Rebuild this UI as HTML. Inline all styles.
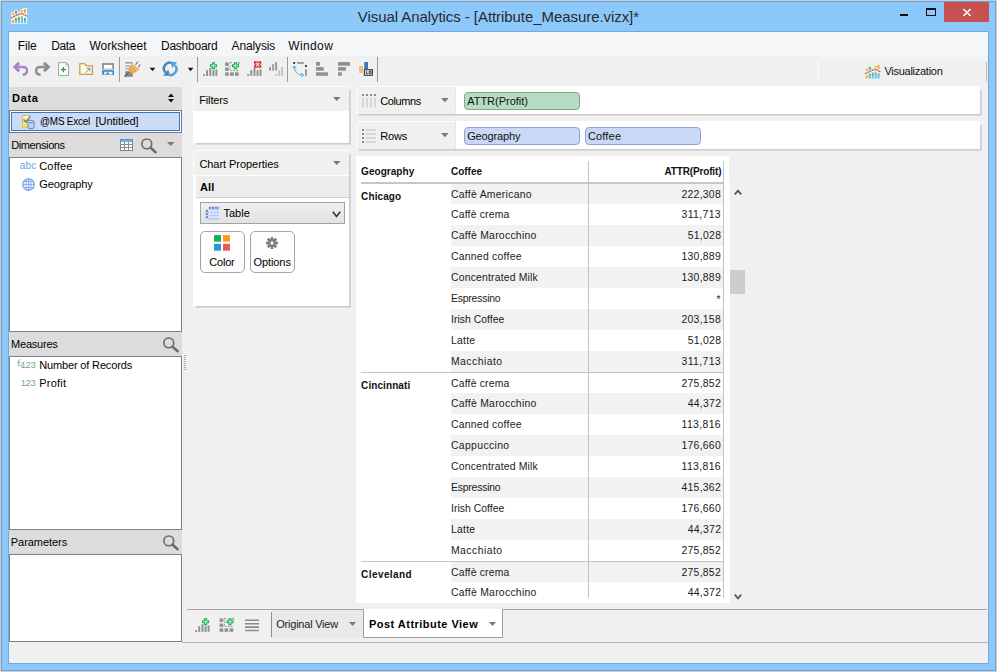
<!DOCTYPE html>
<html lang="en"><head><meta charset="utf-8"><title>Visual Analytics - [Attribute_Measure.vizx]*</title>
<style>
html,body{margin:0;padding:0;}
body{width:997px;height:672px;overflow:hidden;background:#8cc8fa;position:relative;font-family:"Liberation Sans",Arial,sans-serif;}
#app div,#app svg,#app span{position:absolute;}
#app span{white-space:pre;line-height:1;display:block;}
#app{position:absolute;left:0;top:0;width:997px;height:672px;overflow:hidden;}
svg{overflow:visible;}
</style></head>
<body><div id="app">
<div style="left:0px;top:0px;width:997px;height:672px;box-sizing:border-box;border:1px solid #cfcdc9;"></div>
<div style="left:1px;top:1px;width:995px;height:670px;box-sizing:border-box;border:1px solid #6da0d6;"></div>
<svg style="left:11px;top:8px" width="16" height="16" viewBox="0 0 16 16"><path d="M0 4.2 H3.2 V2.25 H7.1 V3.9 H9.3 V1.2 H12.1 V0.1 H16.1 V15.8 H0 Z" fill="#fbf5ea"/><rect x="0.9" y="4.9" width="2.1" height="2" fill="#fbad18"/><rect x="3.9" y="3" width="2.2" height="2.8" fill="#5fad65"/><rect x="10" y="2.1" width="2" height="1.8" fill="#fbad18"/><rect x="13" y="1" width="2" height="3.9" fill="#fbad18"/><rect x="0.9" y="11.9" width="2.1" height="3" fill="#fbad18"/><rect x="3.9" y="10.1" width="2.1" height="1.9" fill="#5fad65"/><rect x="3.9" y="12" width="2.1" height="2.9" fill="#5bc0fb"/><rect x="7" y="8.9" width="1.9" height="3.1" fill="#5fad65"/><rect x="7" y="12" width="1.9" height="2.9" fill="#5bc0fb"/><rect x="10" y="8.9" width="2" height="6" fill="#5bc0fb"/><rect x="10.4" y="8" width="1" height="1" fill="#5fad65"/><rect x="13" y="9.9" width="2" height="2.1" fill="#5fad65"/><rect x="13" y="12" width="2" height="2.9" fill="#5bc0fb"/><path d="M0 10.1 Q5 7.2 10 5.5 Q13 6 16.1 8.4" fill="none" stroke="#f5a58c" stroke-width="1.5"/><path d="M0 10.1 Q5 7.2 10 5.5 Q13 6 16.1 8.4" fill="none" stroke="#8b6bc6" stroke-width="1.1" stroke-dasharray="1.6 1"/></svg>
<span id="t0" style="top:9.00px;font-size:15px;color:#2a2a2a;letter-spacing:-0.064px;left:357.80px;">Visual Analytics - [Attribute_Measure.vizx]*</span>
<div style="left:900px;top:14px;width:8px;height:2px;background:#111;"></div>
<div style="left:926px;top:8px;width:10px;height:8px;box-sizing:border-box;border:1px solid #111;border-top:2px solid #111;"></div>
<div style="left:944px;top:2px;width:45px;height:20px;background:#c75050;"></div>
<svg style="left:962px;top:8px" width="10" height="9" viewBox="0 0 10 9"><path d="M1.4 1 L8.6 8 M8.6 1 L1.4 8" stroke="#fff" stroke-width="1.6" fill="none"/></svg>
<div style="left:8px;top:31px;width:981px;height:633px;background:#f0f0f0;box-sizing:border-box;border:1px solid #70a8e0;"></div>
<div style="left:9px;top:32px;width:979px;height:24px;background:#f5f6f7;"></div>
<span id="t1" style="top:40.00px;font-size:12px;color:#0a0a0a;letter-spacing:-0.136px;left:17.70px;">File</span>
<span id="t2" style="top:40.00px;font-size:12px;color:#0a0a0a;letter-spacing:-0.390px;left:51.20px;">Data</span>
<span id="t3" style="top:40.00px;font-size:12px;color:#0a0a0a;letter-spacing:0.007px;left:89.40px;">Worksheet</span>
<span id="t4" style="top:40.00px;font-size:12px;color:#0a0a0a;letter-spacing:-0.247px;left:161.00px;">Dashboard</span>
<span id="t5" style="top:40.00px;font-size:12px;color:#0a0a0a;letter-spacing:-0.123px;left:231.50px;">Analysis</span>
<span id="t6" style="top:40.00px;font-size:12px;color:#0a0a0a;letter-spacing:0.385px;left:288.20px;">Window</span>
<svg style="left:0;top:56px" width="400" height="30" viewBox="0 56 400 30"><path d="M19.2 62.9 L14.9 67 L19.2 71.1" fill="none" stroke="#a983c9" stroke-width="3" stroke-linejoin="miter"/><path d="M15.5 67 H23 C28 67 29 73.5 22.6 75" fill="none" stroke="#a983c9" stroke-width="2.3"/><path d="M44 62.9 L48.3 67 L44 71.1" fill="none" stroke="#8d8d8d" stroke-width="3"/><path d="M47.7 67 H40.2 C35.2 67 34.2 73.5 40.6 75" fill="none" stroke="#8d8d8d" stroke-width="2.3"/><path d="M58.5 62.6 H66 L68.5 65.1 V75.4 H58.5 Z" fill="#fff" stroke="#a2a2a2" stroke-width="1"/><path d="M66 62.6 V65.1 H68.5 Z" fill="#d8d8d8" stroke="#a2a2a2" stroke-width=".7"/><path d="M63.4 67 V72.2 M60.8 69.6 H66" stroke="#2a9a35" stroke-width="1.3"/><path d="M79.8 74.4 V63.7 H84.4 L86.6 65.8 H92.4 V74.4 Z" fill="#fffbd6" stroke="#c69c5e" stroke-width="1.3" stroke-linejoin="round"/><path d="M85.4 72.8 L89.6 68.6 M86.8 68.3 H89.9 V71.4" stroke="#3a8fd0" stroke-width=".9" fill="none"/><rect x="102" y="63.1" width="12" height="6.2" fill="#8e8e8e"/><rect x="103.8" y="64.9" width="8.5" height="3.8" fill="#fff"/><path d="M102 69.9 H114 V75 H103 L102 74 Z" fill="#3f8fcf"/><rect x="104.2" y="71.8" width="8.2" height="2.6" fill="#f4f8fc"/><rect x="106.3" y="72.5" width="2.7" height="1.9" fill="#3f8fcf"/><rect x="119" y="57" width="1" height="25" fill="#9a9a9a"/><rect x="125.2" y="62.3" width="7.6" height="1.1" fill="#7c7c7c"/><rect x="125.2" y="65.4" width="7.6" height="1.2" fill="#a0a0a0"/><rect x="125.2" y="68.3" width="7.6" height="1.2" fill="#a0a0a0"/><rect x="125.2" y="71.2" width="7.6" height="5.6" fill="#8c8c8c"/><path d="M124.5 76.8 L129.6 71.6" stroke="#5f5f5f" stroke-width="1.3"/><path d="M135.4 64.8 L138 61.7 M138.3 67.6 L140.2 64.2" stroke="#777" stroke-width="1.1"/><path d="M132.2 63.4 L139.2 69.6 C139.4 70.4 138.4 70.6 137.6 70.2 C136 73 131.6 74.6 129.4 72.4 C127 70 128.6 66.4 131.8 64.6 C131.2 63.8 131.6 63.2 132.2 63.4 Z" fill="#e9a85c"/><path d="M131.4 65.2 L137.6 70.4" stroke="#f6d3a4" stroke-width=".8"/><rect x="129.8" y="72.7" width="1.2" height="1.2" fill="#22c422"/><path d="M149.7 67.8 H155.3 L152.5 71.2 Z" fill="#111"/><path d="M172.4 63.2 A5.9 5.9 0 0 0 165.6 72.6" fill="none" stroke="#3f86c2" stroke-width="2.5"/><path d="M163.1 75.7 H169.9 L168.3 69.5 Z" fill="#3f86c2"/><g transform="rotate(180 170.2 68.8)"><path d="M172.4 63.2 A5.9 5.9 0 0 0 165.6 72.6" fill="none" stroke="#5aa2d6" stroke-width="2.5"/><path d="M163.1 75.7 H169.9 L168.3 69.5 Z" fill="#5aa2d6"/></g><path d="M187.8 67.8 H193.4 L190.6 71.2 Z" fill="#111"/><rect x="197" y="57" width="1" height="25" fill="#9a9a9a"/><rect x="203.0" y="74.1" width="1.9" height="1.8" fill="#8f8f8f"/><rect x="206.1" y="70.2" width="1.9" height="5.7" fill="#8f8f8f"/><rect x="209.3" y="68.1" width="1.9" height="7.8" fill="#8f8f8f"/><rect x="212.4" y="70.2" width="1.9" height="5.7" fill="#8f8f8f"/><rect x="215.4" y="69.3" width="1.9" height="6.6" fill="#8f8f8f"/><path d="M211.95 62.2 h3.1 v1.95 h1.95 v3.1 h-1.95 v1.95 h-3.1 v-1.95 h-1.95 v-3.1 h1.95 Z" fill="#14b254"/><path d="M213.5 63.400000000000006 V68.0 M211.2 65.7 H215.8" stroke="#a8ecb8" stroke-width="1.3"/><rect x="225.1" y="62.5" width="3.7" height="3.4" fill="#8f8f8f"/><rect x="230.0" y="62.5" width="3.7" height="3.4" fill="#8f8f8f"/><rect x="235.0" y="62.5" width="3.7" height="3.4" fill="#8f8f8f"/><rect x="225.1" y="67.5" width="3.7" height="3.4" fill="#8f8f8f"/><rect x="230.0" y="67.5" width="3.7" height="3.4" fill="#8f8f8f"/><rect x="235.0" y="67.5" width="3.7" height="3.4" fill="#8f8f8f"/><rect x="225.1" y="72.4" width="3.7" height="3.4" fill="#8f8f8f"/><rect x="230.0" y="72.4" width="3.7" height="3.4" fill="#8f8f8f"/><rect x="235.0" y="72.4" width="3.7" height="3.4" fill="#8f8f8f"/><rect x="229.7" y="61.9" width="9.6" height="9" fill="#f0f0f0"/><path d="M230.1 65.5 V70.5 H239.1" fill="none" stroke="#8f8f8f" stroke-width="1" stroke-dasharray="1.6 1.2"/><path d="M230.1 63.5 V62.4 H231.6 M237.6 62.4 H239.1 V64.0" fill="none" stroke="#8f8f8f" stroke-width="1"/><path d="M233.95 62.2 h3.1 v1.95 h1.95 v3.1 h-1.95 v1.95 h-3.1 v-1.95 h-1.95 v-3.1 h1.95 Z" fill="#14b254"/><path d="M235.5 63.400000000000006 V68.0 M233.2 65.7 H237.8" stroke="#a8ecb8" stroke-width="1.3"/><rect x="247.2" y="74.1" width="1.9" height="1.8" fill="#8f8f8f"/><rect x="250.3" y="70.2" width="1.9" height="5.7" fill="#8f8f8f"/><rect x="253.5" y="68.1" width="1.9" height="7.8" fill="#8f8f8f"/><rect x="256.6" y="70.2" width="1.9" height="5.7" fill="#8f8f8f"/><rect x="259.6" y="69.3" width="1.9" height="6.6" fill="#8f8f8f"/><path d="M254 61.2 H261.2 V67.8 H254 Z" fill="#e81c24"/><path d="M257.6 61 L256.7 62.1 H258.5 Z M257.6 68 L256.7 66.9 H258.5 Z M253.8 64.5 L254.9 63.6 V65.4 Z M261.4 64.5 L260.3 63.6 V65.4 Z" fill="#f0f0f0"/><path d="M255.7 62.6 L259.5 66.4 M259.5 62.6 L255.7 66.4" stroke="#f9b4b4" stroke-width="1.5"/><rect x="269.1" y="67" width="1.9" height="3.6" fill="#9a9a9a"/><rect x="272.2" y="64.1" width="1.9" height="6.5" fill="#9a9a9a"/><rect x="275.2" y="62" width="1.9" height="8.6" fill="#9a9a9a"/><rect x="275.2" y="74" width="1.9" height="1.9" fill="#c2c2c2"/><rect x="278.2" y="70.2" width="1.9" height="5.7" fill="#c2c2c2"/><rect x="281.2" y="67" width="1.9" height="8.9" fill="#c2c2c2"/><rect x="287" y="57" width="1" height="25" fill="#9a9a9a"/><rect x="293.2" y="62" width="1.9" height="1.9" fill="#333"/><rect x="297.1" y="62" width="6.7" height="1.9" fill="#9a9a9a"/><rect x="305" y="65.1" width="1.9" height="1.9" fill="#333"/><rect x="305" y="69.4" width="1.9" height="6.4" fill="#9a9a9a"/><path d="M294.2 66.4 C294.4 71.6 298 75 303.2 75.2" fill="none" stroke="#4aa8e8" stroke-width="1.1"/><path d="M292.8 68.6 L294.2 66 L296.4 68" fill="none" stroke="#4aa8e8" stroke-width="1"/><path d="M301 73 L303.6 75.2 L301.2 76.6" fill="none" stroke="#4aa8e8" stroke-width="1"/><rect x="316" y="62" width="3.9" height="3.7" fill="#909090"/><rect x="316" y="67.1" width="7.7" height="3.6" fill="#909090"/><rect x="316" y="72.3" width="11.9" height="3.5" fill="#909090"/><rect x="338" y="62" width="12" height="3.7" fill="#909090"/><rect x="338" y="67.1" width="7.9" height="3.6" fill="#909090"/><rect x="338" y="72.3" width="3.8" height="3.5" fill="#909090"/><rect x="359" y="65.9" width="4" height="7" fill="#ecc27c"/><rect x="364.2" y="62" width="3.8" height="7.4" fill="#3d78b8"/><rect x="364.4" y="69.7" width="8" height="5.6" fill="#e4ebf3" stroke="#444" stroke-width="1.2"/><path d="M366.4 71.2 V73.6 H367.8 M369.2 71.3 h1.7 v2.3 h-1.7 Z" stroke="#1c2c50" stroke-width=".9" fill="none"/><rect x="377" y="57" width="1" height="25" fill="#9a9a9a"/></svg>
<div style="left:818px;top:57px;width:169px;height:24px;background:#f0f0ee;border-top-left-radius:7px;box-sizing:border-box;border-top:1px solid #fafafa;border-left:1px solid #fafafa;"></div>
<div style="left:986px;top:62px;width:1px;height:19px;background:#b8b8b8;"></div>
<svg style="left:865px;top:63.5px" width="15.5" height="15.5" viewBox="0 0 16 16"><rect x="0.9" y="4.9" width="2.1" height="2" fill="#fbad18"/><rect x="3.9" y="3" width="2.2" height="2.8" fill="#5fad65"/><rect x="10" y="2.1" width="2" height="1.8" fill="#fbad18"/><rect x="13" y="1" width="2" height="3.9" fill="#fbad18"/><rect x="0.9" y="11.9" width="2.1" height="3" fill="#fbad18"/><rect x="3.9" y="10.1" width="2.1" height="1.9" fill="#5fad65"/><rect x="3.9" y="12" width="2.1" height="2.9" fill="#5bc0fb"/><rect x="7" y="8.9" width="1.9" height="3.1" fill="#5fad65"/><rect x="7" y="12" width="1.9" height="2.9" fill="#5bc0fb"/><rect x="10" y="8.9" width="2" height="6" fill="#5bc0fb"/><rect x="10.4" y="8" width="1" height="1" fill="#5fad65"/><rect x="13" y="9.9" width="2" height="2.1" fill="#5fad65"/><rect x="13" y="12" width="2" height="2.9" fill="#5bc0fb"/><path d="M0 10.1 Q5 7.2 10 5.5 Q13 6 16.1 8.4" fill="none" stroke="#f5a58c" stroke-width="1.5"/><path d="M0 10.1 Q5 7.2 10 5.5 Q13 6 16.1 8.4" fill="none" stroke="#8b6bc6" stroke-width="1.1" stroke-dasharray="1.6 1"/></svg>
<span id="t7" style="top:66.00px;font-size:11px;color:#101020;letter-spacing:-0.274px;left:884.50px;">Visualization</span>
<div style="left:9px;top:87px;width:173px;height:555px;background:#dcdcdc;"></div>
<span id="t8" style="top:93.00px;font-size:11px;color:#000;font-weight:bold;letter-spacing:0.639px;left:12.10px;">Data</span>
<svg style="left:167px;top:93px" width="8" height="10" viewBox="0 0 8 10"><path d="M4 0.5 L7 4 L1 4 Z M4 9.5 L7 6 L1 6 Z" fill="#111"/></svg>
<div style="left:9px;top:110px;width:173px;height:23px;background:#fff;box-sizing:border-box;border:1px solid #7a7a7a;"></div>
<div style="left:11px;top:112px;width:169px;height:19px;background:#ccdcf5;box-sizing:border-box;border:1px solid #3d72cf;"></div>
<svg style="left:22px;top:114.5px" width="13" height="14" viewBox="0 0 13 14"><rect x="0.5" y="0.5" width="7" height="11.5" fill="#f7e27a" stroke="#e3c23a" stroke-width="1"/><rect x="1" y="1" width="6.5" height="2.5" fill="#fdf6c8"/><path d="M1.5 4.5 L4 7 L8.5 1" stroke="#3d6fb8" stroke-width="1.2" fill="none"/><path d="M6 6.5 v6 a3 1.2 0 0 0 6 0 v-6" fill="#bcd2ee" stroke="#5a84c0" stroke-width="1"/><ellipse cx="9" cy="6.5" rx="3" ry="1.2" fill="#dfeaf8" stroke="#5a84c0" stroke-width="1"/></svg>
<span id="t9" style="top:116.00px;font-size:11px;color:#000;letter-spacing:-0.230px;left:40.10px;transform:scaleX(0.9);transform-origin:0 50%;">@MS Excel</span>
<span id="t10" style="top:116.00px;font-size:11px;color:#000;letter-spacing:-0.032px;left:95.50px;">[Untitled]</span>
<span id="t11" style="top:140.00px;font-size:11px;color:#000;letter-spacing:-0.397px;left:11.20px;">Dimensions</span>
<svg style="left:120px;top:139px" width="13" height="12" viewBox="0 0 13 12"><rect x="0.5" y="0.5" width="12" height="11" fill="#fff" stroke="#858585" stroke-width="1"/><rect x="0.3" y="0.2" width="12.4" height="2.6" fill="#3a9de0"/><rect x="1.5" y="1.2" width="10" height="0.7" fill="#8ccaf2"/><path d="M1 5.5 H12 M1 8.5 H12 M4.5 3 V11 M8.5 3 V11" stroke="#8c8c8c" stroke-width="1.1"/></svg>
<svg style="left:141px;top:138px" width="16" height="16" viewBox="0 0 16 16"><circle cx="5.8" cy="5.9" r="4.9" fill="none" stroke="#6a6a6a" stroke-width="1.6"/><path d="M9.6 9.7 L14.6 14.2" stroke="#6a6a6a" stroke-width="2.5" stroke-linecap="round"/></svg>
<svg style="left:166.9px;top:142px" width="7.5" height="4.1" viewBox="0 0 7.5 4.1"><path d="M0 0 H7.5 L3.75 4.1 Z" fill="#7a7a7a"/></svg>
<div style="left:9px;top:157px;width:173px;height:175px;background:#fff;box-sizing:border-box;border:1px solid #7a8290;"></div>
<span id="t12" style="top:161.00px;font-size:10px;color:#6a9fe8;letter-spacing:0.125px;left:19.80px;">abc</span>
<span id="t13" style="top:161.00px;font-size:11px;color:#000;letter-spacing:0.214px;left:39.20px;">Coffee</span>
<svg style="left:21.5px;top:177.5px" width="13" height="13" viewBox="0 0 13 13"><circle cx="6.5" cy="6.5" r="5.8" fill="#edf3fe" stroke="#6a9be6" stroke-width="1.1"/><ellipse cx="6.5" cy="6.5" rx="2.6" ry="5.8" fill="none" stroke="#78a4ea" stroke-width=".8"/><path d="M0.7 6.5 H12.3 M1.6 3.5 H11.4 M1.6 9.5 H11.4 M6.5 .7 V12.3" stroke="#78a4ea" stroke-width=".8" fill="none"/></svg>
<span id="t14" style="top:179.00px;font-size:11px;color:#000;letter-spacing:-0.104px;left:39.20px;">Geography</span>
<span id="t15" style="top:339.00px;font-size:11px;color:#000;letter-spacing:-0.225px;left:11.10px;">Measures</span>
<svg style="left:163px;top:337px" width="16" height="16" viewBox="0 0 16 16"><circle cx="5.8" cy="5.9" r="4.9" fill="none" stroke="#6a6a6a" stroke-width="1.6"/><path d="M9.6 9.7 L14.6 14.2" stroke="#6a6a6a" stroke-width="2.5" stroke-linecap="round"/></svg>
<div style="left:9px;top:356px;width:173px;height:174px;background:#fff;box-sizing:border-box;border:1px solid #7a8290;"></div>
<span id="t16" style="top:360.00px;font-size:9.5px;color:#70a890;letter-spacing:-0.353px;left:20.70px;">123</span>
<svg style="left:16px;top:359px" width="7" height="8" viewBox="0 0 7 8"><path d="M4.6 0.8 C3.2 0.2 2.8 1.5 2.6 3 L2 7.2 M1 3.2 H4.4" stroke="#7fb09c" stroke-width=".9" fill="none"/><path d="M3.6 5.2 L6.4 7.8 M6.4 5.2 L3.6 7.8" stroke="#7fb09c" stroke-width=".8"/></svg>
<span id="t17" style="top:360.00px;font-size:11px;color:#000;letter-spacing:-0.151px;left:39.20px;">Number of Records</span>
<span id="t18" style="top:378.00px;font-size:9.5px;color:#70a890;letter-spacing:-0.353px;left:20.70px;">123</span>
<span id="t19" style="top:378.00px;font-size:11px;color:#000;letter-spacing:0.252px;left:39.20px;">Profit</span>
<div style="left:184px;top:355px;width:2px;height:1px;background:#b0b0b0;"></div>
<div style="left:184px;top:357px;width:2px;height:1px;background:#b0b0b0;"></div>
<div style="left:184px;top:359px;width:2px;height:1px;background:#b0b0b0;"></div>
<div style="left:184px;top:361px;width:2px;height:1px;background:#b0b0b0;"></div>
<div style="left:184px;top:363px;width:2px;height:1px;background:#b0b0b0;"></div>
<div style="left:184px;top:365px;width:2px;height:1px;background:#b0b0b0;"></div>
<div style="left:184px;top:367px;width:2px;height:1px;background:#b0b0b0;"></div>
<div style="left:184px;top:369px;width:2px;height:1px;background:#b0b0b0;"></div>
<span id="t20" style="top:537.00px;font-size:11px;color:#000;letter-spacing:-0.056px;left:10.80px;">Parameters</span>
<svg style="left:163px;top:535px" width="16" height="16" viewBox="0 0 16 16"><circle cx="5.8" cy="5.9" r="4.9" fill="none" stroke="#6a6a6a" stroke-width="1.6"/><path d="M9.6 9.7 L14.6 14.2" stroke="#6a6a6a" stroke-width="2.5" stroke-linecap="round"/></svg>
<div style="left:9px;top:554px;width:173px;height:88px;background:#fff;box-sizing:border-box;border:1px solid #7a8290;"></div>
<div style="left:187px;top:609px;width:800px;height:1px;background:#a6a6a6;"></div>
<div style="left:182px;top:642px;width:806px;height:1px;background:#b4b4b4;"></div>
<svg style="left:0;top:612px" width="300" height="30" viewBox="0 56 300 30"><rect x="195.2" y="74.1" width="1.9" height="1.8" fill="#8f8f8f"/><rect x="198.3" y="70.2" width="1.9" height="5.7" fill="#8f8f8f"/><rect x="201.5" y="68.1" width="1.9" height="7.8" fill="#8f8f8f"/><rect x="204.6" y="70.2" width="1.9" height="5.7" fill="#8f8f8f"/><rect x="207.6" y="69.3" width="1.9" height="6.6" fill="#8f8f8f"/><path d="M204.04999999999998 62.2 h3.1 v1.95 h1.95 v3.1 h-1.95 v1.95 h-3.1 v-1.95 h-1.95 v-3.1 h1.95 Z" fill="#14b254"/><path d="M205.6 63.400000000000006 V68.0 M203.29999999999998 65.7 H207.9" stroke="#a8ecb8" stroke-width="1.3"/><rect x="219.6" y="62.5" width="3.7" height="3.4" fill="#8f8f8f"/><rect x="224.5" y="62.5" width="3.7" height="3.4" fill="#8f8f8f"/><rect x="229.5" y="62.5" width="3.7" height="3.4" fill="#8f8f8f"/><rect x="219.6" y="67.5" width="3.7" height="3.4" fill="#8f8f8f"/><rect x="224.5" y="67.5" width="3.7" height="3.4" fill="#8f8f8f"/><rect x="229.5" y="67.5" width="3.7" height="3.4" fill="#8f8f8f"/><rect x="219.6" y="72.4" width="3.7" height="3.4" fill="#8f8f8f"/><rect x="224.5" y="72.4" width="3.7" height="3.4" fill="#8f8f8f"/><rect x="229.5" y="72.4" width="3.7" height="3.4" fill="#8f8f8f"/><rect x="224.2" y="61.9" width="9.6" height="9" fill="#f0f0f0"/><path d="M224.6 65.5 V70.5 H233.6" fill="none" stroke="#8f8f8f" stroke-width="1" stroke-dasharray="1.6 1.2"/><path d="M224.6 63.5 V62.4 H226.1 M232.1 62.4 H233.6 V64.0" fill="none" stroke="#8f8f8f" stroke-width="1"/><path d="M228.45 62.2 h3.1 v1.95 h1.95 v3.1 h-1.95 v1.95 h-3.1 v-1.95 h-1.95 v-3.1 h1.95 Z" fill="#14b254"/><path d="M230.0 63.400000000000006 V68.0 M227.7 65.7 H232.3" stroke="#a8ecb8" stroke-width="1.3"/><path d="M245 64.3 H259 M245 67.7 H259 M245 71.1 H259 M245 74.5 H259" stroke="#8a8a8a" stroke-width="1.6"/></svg>
<div style="left:272px;top:610px;width:91px;height:28px;background:#e9e9e9;"></div>
<div style="left:271px;top:612px;width:1px;height:25px;background:#8c8c8c;"></div>
<span id="t21" style="top:619.00px;font-size:11px;color:#222;letter-spacing:-0.231px;left:276.30px;">Original View</span>
<svg style="left:349.3px;top:622.3px" width="7" height="4" viewBox="0 0 7 4"><path d="M0 0 H7 L3.5 4 Z" fill="#7a7a7a"/></svg>
<div style="left:363px;top:609px;width:140px;height:29px;background:#fff;box-sizing:border-box;border:1px solid #9c9c9c;border-top:none;"></div>
<span id="t22" style="top:619.00px;font-size:11px;color:#000;font-weight:bold;letter-spacing:0.471px;left:369.00px;">Post Attribute View</span>
<svg style="left:488.9px;top:622.3px" width="7" height="4" viewBox="0 0 7 4"><path d="M0 0 H7 L3.5 4 Z" fill="#7a7a7a"/></svg>
<div style="left:349px;top:90px;width:2px;height:54px;background:#c4c4c4;background:linear-gradient(90deg,#c4c4c4,#e0e0e0);"></div>
<div style="left:196px;top:143px;width:155px;height:2px;background:#c4c4c4;background:linear-gradient(#c4c4c4,#e2e2e2);"></div>
<div style="left:193px;top:86px;width:156px;height:57px;background:#fff;border-top-left-radius:6px;"></div>
<div style="left:193px;top:86px;width:156px;height:25px;background:#f0f0ee;border-top-left-radius:6px;box-sizing:border-box;border-top:1px solid #fcfcfc;border-left:1px solid #fcfcfc;"></div>
<span id="t23" style="top:95.00px;font-size:11px;color:#000;letter-spacing:-0.136px;left:199.20px;">Filters</span>
<svg style="left:333px;top:97.3px" width="7.5" height="4" viewBox="0 0 7.5 4"><path d="M0 0 H7.5 L3.75 4 Z" fill="#7a7a7a"/></svg>
<div style="left:349px;top:154px;width:2px;height:153px;background:#c4c4c4;background:linear-gradient(90deg,#c4c4c4,#e0e0e0);"></div>
<div style="left:196px;top:306px;width:155px;height:2px;background:#c4c4c4;background:linear-gradient(#c4c4c4,#e2e2e2);"></div>
<div style="left:193px;top:150px;width:156px;height:156px;background:#fff;border-top-left-radius:6px;"></div>
<div style="left:193px;top:150px;width:156px;height:25px;background:#f0f0ee;border-top-left-radius:6px;box-sizing:border-box;border-top:1px solid #fcfcfc;border-left:1px solid #fcfcfc;"></div>
<span id="t24" style="top:159.00px;font-size:11px;color:#000;letter-spacing:-0.050px;left:199.40px;">Chart Properties</span>
<svg style="left:333px;top:161.3px" width="7.5" height="4" viewBox="0 0 7.5 4"><path d="M0 0 H7.5 L3.75 4 Z" fill="#7a7a7a"/></svg>
<div style="left:193px;top:175px;width:156px;height:1px;background:#fdfdfd;"></div>
<div style="left:196px;top:176px;width:153px;height:22px;background:#ededf0;box-sizing:border-box;border-bottom:1px solid #cfcfd2;"></div>
<span id="t25" style="top:182.00px;font-size:11px;color:#000;font-weight:bold;letter-spacing:0.146px;left:200.00px;">All</span>
<div style="left:200px;top:202px;width:145px;height:22px;background:#e9e9e9;box-sizing:border-box;border:1px solid #9fa2a6;background:linear-gradient(#efefef,#e2e2e2);"></div>
<svg style="left:205px;top:206px" width="14" height="14" viewBox="0 0 14 14"><rect x="3.2" y="0" width="10.8" height="3.3" fill="#d6d6d6"/><rect x="0.2" y="3" width="3.4" height="10.6" fill="#d6d6d6"/><rect x="3.6" y="3.3" width="10.4" height="10.3" fill="#b6c6ff"/><rect x="4.30" y="1.1" width="1.7" height="1.7" fill="#3a6cf4"/><rect x="4.30" y="4.20" width="1.7" height="1.6" fill="#fff"/><rect x="4.30" y="7.25" width="1.7" height="1.6" fill="#fff"/><rect x="4.30" y="10.30" width="1.7" height="1.6" fill="#fff"/><rect x="7.25" y="1.1" width="1.7" height="1.7" fill="#3a6cf4"/><rect x="7.25" y="4.20" width="1.7" height="1.6" fill="#fff"/><rect x="7.25" y="7.25" width="1.7" height="1.6" fill="#fff"/><rect x="7.25" y="10.30" width="1.7" height="1.6" fill="#fff"/><rect x="10.20" y="1.1" width="1.7" height="1.7" fill="#3a6cf4"/><rect x="10.20" y="4.20" width="1.7" height="1.6" fill="#fff"/><rect x="10.20" y="7.25" width="1.7" height="1.6" fill="#fff"/><rect x="10.20" y="10.30" width="1.7" height="1.6" fill="#fff"/><rect x="13.15" y="1.1" width="0.9" height="1.7" fill="#3a6cf4"/><rect x="13.15" y="4.20" width="0.9" height="1.6" fill="#fff"/><rect x="13.15" y="7.25" width="0.9" height="1.6" fill="#fff"/><rect x="13.15" y="10.30" width="0.9" height="1.6" fill="#fff"/><rect x="1.1" y="4.20" width="1.7" height="1.7" fill="#3a6cf4"/><rect x="1.1" y="7.25" width="1.7" height="1.7" fill="#3a6cf4"/><rect x="1.1" y="10.30" width="1.7" height="1.7" fill="#3a6cf4"/></svg>
<span id="t26" style="top:208.00px;font-size:11px;color:#000;left:223.50px;">Table</span>
<svg style="left:331.5px;top:210.5px" width="9" height="7" viewBox="0 0 9 7"><path d="M0.8 0.8 L4.5 5.4 L8.2 0.8" fill="none" stroke="#333" stroke-width="1.6"/></svg>
<div style="left:200px;top:231px;width:45px;height:42px;background:#fdfdfd;box-sizing:border-box;border:1px solid #a4a4a4;border-radius:5px;"></div>
<svg style="left:214px;top:235px" width="16" height="16" viewBox="0 0 16 16"><rect x="0" y="0.1" width="7" height="6.5" fill="#12b05a"/><rect x="9" y="0.1" width="7" height="6.5" fill="#f79a20"/><rect x="0" y="8.9" width="7" height="6.8" fill="#1e9bd2"/><rect x="9" y="8.9" width="7" height="6.8" fill="#ea5b4b"/></svg>
<span id="t27" style="top:257.00px;font-size:11px;color:#000;letter-spacing:-0.219px;left:209.30px;">Color</span>
<div style="left:250px;top:231px;width:45px;height:42px;background:#fdfdfd;box-sizing:border-box;border:1px solid #a4a4a4;border-radius:5px;"></div>
<svg style="left:266px;top:236.9px" width="12" height="12" viewBox="0 0 12 12"><g transform="translate(6,6)"><rect x="-1.3" y="-6" width="2.6" height="3" fill="#7d7d7d" transform="rotate(0)"/><rect x="-1.3" y="-6" width="2.6" height="3" fill="#7d7d7d" transform="rotate(45)"/><rect x="-1.3" y="-6" width="2.6" height="3" fill="#7d7d7d" transform="rotate(90)"/><rect x="-1.3" y="-6" width="2.6" height="3" fill="#7d7d7d" transform="rotate(135)"/><rect x="-1.3" y="-6" width="2.6" height="3" fill="#7d7d7d" transform="rotate(180)"/><rect x="-1.3" y="-6" width="2.6" height="3" fill="#7d7d7d" transform="rotate(225)"/><rect x="-1.3" y="-6" width="2.6" height="3" fill="#7d7d7d" transform="rotate(270)"/><rect x="-1.3" y="-6" width="2.6" height="3" fill="#7d7d7d" transform="rotate(315)"/><circle r="3.9" fill="#7d7d7d"/><circle r="1.7" fill="#fdfdfd"/></g></svg>
<span id="t28" style="top:257.00px;font-size:11px;color:#000;letter-spacing:-0.089px;left:253.50px;">Options</span>
<div style="left:980px;top:90px;width:2px;height:25px;background:#c4c4c4;background:linear-gradient(90deg,#c4c4c4,#e0e0e0);"></div>
<div style="left:359px;top:114px;width:622px;height:2px;background:#c4c4c4;background:linear-gradient(#c4c4c4,#e2e2e2);"></div>
<div style="left:356px;top:86px;width:624px;height:28px;background:#fff;border-top-left-radius:6px;"></div>
<div style="left:356px;top:86px;width:100px;height:28px;background:#f0f0ee;border-top-left-radius:6px;box-sizing:border-box;border-top:1px solid #fcfcfc;border-left:1px solid #fcfcfc;border-right:1px solid #ebe8d8;"></div>
<span id="t29" style="top:96.00px;font-size:11px;color:#000;letter-spacing:-0.415px;left:380.30px;">Columns</span>
<div style="left:980px;top:125px;width:2px;height:25px;background:#c4c4c4;background:linear-gradient(90deg,#c4c4c4,#e0e0e0);"></div>
<div style="left:359px;top:149px;width:622px;height:2px;background:#c4c4c4;background:linear-gradient(#c4c4c4,#e2e2e2);"></div>
<div style="left:356px;top:121px;width:624px;height:28px;background:#fff;border-top-left-radius:6px;"></div>
<div style="left:356px;top:121px;width:100px;height:28px;background:#f0f0ee;border-top-left-radius:6px;box-sizing:border-box;border-top:1px solid #fcfcfc;border-left:1px solid #fcfcfc;border-right:1px solid #ebe8d8;"></div>
<span id="t30" style="top:131.00px;font-size:11px;color:#000;letter-spacing:-0.179px;left:380.30px;">Rows</span>
<svg style="left:362px;top:94px" width="14" height="14" viewBox="0 0 14 14"><rect x="0" y="0" width="2" height="2" fill="#8a8a8a"/><rect x="0" y="3.5" width="2" height="10" fill="#d6d6d6"/><rect x="4" y="0" width="2" height="2" fill="#8a8a8a"/><rect x="4" y="3.5" width="2" height="10" fill="#d6d6d6"/><rect x="8" y="0" width="2" height="2" fill="#8a8a8a"/><rect x="8" y="3.5" width="2" height="10" fill="#d6d6d6"/><rect x="12" y="0" width="2" height="2" fill="#8a8a8a"/><rect x="12" y="3.5" width="2" height="10" fill="#d6d6d6"/></svg>
<svg style="left:362px;top:129px" width="14" height="14" viewBox="0 0 14 14"><rect x="0" y="0" width="2" height="2" fill="#8a8a8a"/><rect x="3.5" y="0" width="10.5" height="2" fill="#d6d6d6"/><rect x="0" y="4" width="2" height="2" fill="#8a8a8a"/><rect x="3.5" y="4" width="10.5" height="2" fill="#d6d6d6"/><rect x="0" y="8" width="2" height="2" fill="#8a8a8a"/><rect x="3.5" y="8" width="10.5" height="2" fill="#d6d6d6"/><rect x="0" y="12" width="2" height="2" fill="#8a8a8a"/><rect x="3.5" y="12" width="10.5" height="2" fill="#d6d6d6"/></svg>
<svg style="left:441px;top:98px" width="7.7" height="4.3" viewBox="0 0 7.7 4.3"><path d="M0 0 H7.7 L3.85 4.3 Z" fill="#7a7a7a"/></svg>
<svg style="left:441px;top:133px" width="7.7" height="4.3" viewBox="0 0 7.7 4.3"><path d="M0 0 H7.7 L3.85 4.3 Z" fill="#7a7a7a"/></svg>
<div style="left:464px;top:92px;width:116px;height:17.7px;background:#b7dcc4;box-sizing:border-box;border:1px solid #7fa78c;border-radius:4px;"></div>
<span id="t31" style="top:96.00px;font-size:11px;color:#111;letter-spacing:-0.009px;left:467.20px;">ATTR(Profit)</span>
<div style="left:464px;top:127px;width:116px;height:17.7px;background:#c9d9f5;box-sizing:border-box;border:1px solid #8ea6d6;border-radius:4px;"></div>
<span id="t32" style="top:131.00px;font-size:11px;color:#111;letter-spacing:-0.137px;left:467.20px;">Geography</span>
<div style="left:584.7px;top:127px;width:116px;height:17.7px;background:#c9d9f5;box-sizing:border-box;border:1px solid #8ea6d6;border-radius:4px;"></div>
<span id="t33" style="top:131.00px;font-size:11px;color:#111;letter-spacing:0.180px;left:587.90px;">Coffee</span>
<div style="left:356px;top:156px;width:373px;height:28px;background:#fff;"></div>
<div style="left:356px;top:183px;width:374px;height:420px;background:#fff;"></div>
<div style="left:451px;top:184px;width:272px;height:20px;background:#f2f2f2;"></div>
<div style="left:451px;top:225px;width:272px;height:21px;background:#f2f2f2;"></div>
<div style="left:451px;top:267px;width:272px;height:21px;background:#f2f2f2;"></div>
<div style="left:451px;top:309px;width:272px;height:21px;background:#f2f2f2;"></div>
<div style="left:451px;top:351px;width:272px;height:21px;background:#f2f2f2;"></div>
<div style="left:451px;top:393px;width:272px;height:21px;background:#f2f2f2;"></div>
<div style="left:451px;top:435px;width:272px;height:21px;background:#f2f2f2;"></div>
<div style="left:451px;top:477px;width:272px;height:21px;background:#f2f2f2;"></div>
<div style="left:451px;top:519px;width:272px;height:21px;background:#f2f2f2;"></div>
<div style="left:451px;top:561px;width:272px;height:21px;background:#f2f2f2;"></div>
<span id="t34" style="top:167.00px;font-size:10px;color:#111;font-weight:bold;letter-spacing:0.045px;left:361.10px;">Geography</span>
<span id="t35" style="top:167.00px;font-size:10px;color:#111;font-weight:bold;letter-spacing:-0.021px;left:451.00px;">Coffee</span>
<span id="t36" style="top:167.00px;font-size:10px;color:#111;font-weight:bold;letter-spacing:-0.141px;right:275.64px;">ATTR(Profit)</span>
<div style="left:361px;top:182px;width:363px;height:2px;background:#c6c6c6;"></div>
<div style="left:588px;top:161px;width:1px;height:437px;background:#c2c2c2;"></div>
<div style="left:723px;top:161px;width:1px;height:437px;background:#c2c2c2;"></div>
<div style="left:361px;top:372px;width:363px;height:1px;background:#c4c4c4;"></div>
<div style="left:361px;top:561px;width:363px;height:1px;background:#c4c4c4;"></div>
<span id="t37" style="top:192.00px;font-size:10px;color:#111;font-weight:bold;letter-spacing:0.107px;left:361.10px;">Chicago</span>
<span id="t38" style="top:190.00px;font-size:10px;color:#1a1a1a;letter-spacing:0.263px;left:450.90px;transform:scaleX(1.04);transform-origin:0 50%;">Caffè Americano</span>
<span id="t39" style="top:190.00px;font-size:10px;color:#1a1a1a;letter-spacing:0.261px;right:276.13px;transform:scaleX(1.04);transform-origin:100% 50%;">222,308</span>
<span id="t40" style="top:210.00px;font-size:10px;color:#1a1a1a;letter-spacing:0.178px;left:450.90px;transform:scaleX(1.04);transform-origin:0 50%;">Caffè crema</span>
<span id="t41" style="top:210.00px;font-size:10px;color:#1a1a1a;letter-spacing:0.368px;right:276.02px;transform:scaleX(1.04);transform-origin:100% 50%;">311,713</span>
<span id="t42" style="top:231.00px;font-size:10px;color:#1a1a1a;letter-spacing:0.257px;left:450.90px;transform:scaleX(1.04);transform-origin:0 50%;">Caffè Marocchino</span>
<span id="t43" style="top:231.00px;font-size:10px;color:#1a1a1a;letter-spacing:0.270px;right:276.12px;transform:scaleX(1.04);transform-origin:100% 50%;">51,028</span>
<span id="t44" style="top:252.00px;font-size:10px;color:#1a1a1a;letter-spacing:0.239px;left:450.90px;transform:scaleX(1.04);transform-origin:0 50%;">Canned coffee</span>
<span id="t45" style="top:252.00px;font-size:10px;color:#1a1a1a;letter-spacing:0.261px;right:276.13px;transform:scaleX(1.04);transform-origin:100% 50%;">130,889</span>
<span id="t46" style="top:273.00px;font-size:10px;color:#1a1a1a;letter-spacing:0.180px;left:450.90px;transform:scaleX(1.04);transform-origin:0 50%;">Concentrated Milk</span>
<span id="t47" style="top:273.00px;font-size:10px;color:#1a1a1a;letter-spacing:0.261px;right:276.13px;transform:scaleX(1.04);transform-origin:100% 50%;">130,889</span>
<span id="t48" style="top:294.00px;font-size:10px;color:#1a1a1a;letter-spacing:-0.197px;left:450.90px;transform:scaleX(1.04);transform-origin:0 50%;">Espressino</span>
<span id="t49" style="top:295.00px;font-size:10px;color:#1a1a1a;right:276.50px;">*</span>
<span id="t50" style="top:315.00px;font-size:10px;color:#1a1a1a;letter-spacing:0.033px;left:450.90px;transform:scaleX(1.04);transform-origin:0 50%;">Irish Coffee</span>
<span id="t51" style="top:315.00px;font-size:10px;color:#1a1a1a;letter-spacing:0.261px;right:276.13px;transform:scaleX(1.04);transform-origin:100% 50%;">203,158</span>
<span id="t52" style="top:336.00px;font-size:10px;color:#1a1a1a;letter-spacing:0.242px;left:450.90px;transform:scaleX(1.04);transform-origin:0 50%;">Latte</span>
<span id="t53" style="top:336.00px;font-size:10px;color:#1a1a1a;letter-spacing:0.270px;right:276.12px;transform:scaleX(1.04);transform-origin:100% 50%;">51,028</span>
<span id="t54" style="top:357.00px;font-size:10px;color:#1a1a1a;letter-spacing:0.438px;left:450.90px;transform:scaleX(1.04);transform-origin:0 50%;">Macchiato</span>
<span id="t55" style="top:357.00px;font-size:10px;color:#1a1a1a;letter-spacing:0.368px;right:276.02px;transform:scaleX(1.04);transform-origin:100% 50%;">311,713</span>
<span id="t56" style="top:381.00px;font-size:10px;color:#111;font-weight:bold;letter-spacing:0.086px;left:361.10px;">Cincinnati</span>
<span id="t57" style="top:379.00px;font-size:10px;color:#1a1a1a;letter-spacing:0.178px;left:450.90px;transform:scaleX(1.04);transform-origin:0 50%;">Caffè crema</span>
<span id="t58" style="top:379.00px;font-size:10px;color:#1a1a1a;letter-spacing:0.261px;right:276.13px;transform:scaleX(1.04);transform-origin:100% 50%;">275,852</span>
<span id="t59" style="top:399.00px;font-size:10px;color:#1a1a1a;letter-spacing:0.257px;left:450.90px;transform:scaleX(1.04);transform-origin:0 50%;">Caffè Marocchino</span>
<span id="t60" style="top:399.00px;font-size:10px;color:#1a1a1a;letter-spacing:0.270px;right:276.12px;transform:scaleX(1.04);transform-origin:100% 50%;">44,372</span>
<span id="t61" style="top:420.00px;font-size:10px;color:#1a1a1a;letter-spacing:0.239px;left:450.90px;transform:scaleX(1.04);transform-origin:0 50%;">Canned coffee</span>
<span id="t62" style="top:420.00px;font-size:10px;color:#1a1a1a;letter-spacing:0.368px;right:276.02px;transform:scaleX(1.04);transform-origin:100% 50%;">113,816</span>
<span id="t63" style="top:441.00px;font-size:10px;color:#1a1a1a;letter-spacing:0.334px;left:450.90px;transform:scaleX(1.04);transform-origin:0 50%;">Cappuccino</span>
<span id="t64" style="top:441.00px;font-size:10px;color:#1a1a1a;letter-spacing:0.261px;right:276.13px;transform:scaleX(1.04);transform-origin:100% 50%;">176,660</span>
<span id="t65" style="top:462.00px;font-size:10px;color:#1a1a1a;letter-spacing:0.180px;left:450.90px;transform:scaleX(1.04);transform-origin:0 50%;">Concentrated Milk</span>
<span id="t66" style="top:462.00px;font-size:10px;color:#1a1a1a;letter-spacing:0.368px;right:276.02px;transform:scaleX(1.04);transform-origin:100% 50%;">113,816</span>
<span id="t67" style="top:483.00px;font-size:10px;color:#1a1a1a;letter-spacing:-0.197px;left:450.90px;transform:scaleX(1.04);transform-origin:0 50%;">Espressino</span>
<span id="t68" style="top:483.00px;font-size:10px;color:#1a1a1a;letter-spacing:0.261px;right:276.13px;transform:scaleX(1.04);transform-origin:100% 50%;">415,362</span>
<span id="t69" style="top:504.00px;font-size:10px;color:#1a1a1a;letter-spacing:0.033px;left:450.90px;transform:scaleX(1.04);transform-origin:0 50%;">Irish Coffee</span>
<span id="t70" style="top:504.00px;font-size:10px;color:#1a1a1a;letter-spacing:0.261px;right:276.13px;transform:scaleX(1.04);transform-origin:100% 50%;">176,660</span>
<span id="t71" style="top:525.00px;font-size:10px;color:#1a1a1a;letter-spacing:0.242px;left:450.90px;transform:scaleX(1.04);transform-origin:0 50%;">Latte</span>
<span id="t72" style="top:525.00px;font-size:10px;color:#1a1a1a;letter-spacing:0.270px;right:276.12px;transform:scaleX(1.04);transform-origin:100% 50%;">44,372</span>
<span id="t73" style="top:546.00px;font-size:10px;color:#1a1a1a;letter-spacing:0.438px;left:450.90px;transform:scaleX(1.04);transform-origin:0 50%;">Macchiato</span>
<span id="t74" style="top:546.00px;font-size:10px;color:#1a1a1a;letter-spacing:0.261px;right:276.13px;transform:scaleX(1.04);transform-origin:100% 50%;">275,852</span>
<span id="t75" style="top:570.00px;font-size:10px;color:#111;font-weight:bold;letter-spacing:0.417px;left:361.10px;">Cleveland</span>
<span id="t76" style="top:568.00px;font-size:10px;color:#1a1a1a;letter-spacing:0.178px;left:450.90px;transform:scaleX(1.04);transform-origin:0 50%;">Caffè crema</span>
<span id="t77" style="top:568.00px;font-size:10px;color:#1a1a1a;letter-spacing:0.261px;right:276.13px;transform:scaleX(1.04);transform-origin:100% 50%;">275,852</span>
<span id="t78" style="top:588.00px;font-size:10px;color:#1a1a1a;letter-spacing:0.257px;left:450.90px;transform:scaleX(1.04);transform-origin:0 50%;">Caffè Marocchino</span>
<span id="t79" style="top:588.00px;font-size:10px;color:#1a1a1a;letter-spacing:0.270px;right:276.12px;transform:scaleX(1.04);transform-origin:100% 50%;">44,372</span>
<svg style="left:734px;top:189px" width="8" height="6" viewBox="0 0 8 6"><path d="M0.8 5.4 L4 1.6 L7.2 5.4" fill="none" stroke="#555" stroke-width="1.7"/></svg>
<div style="left:730px;top:270px;width:15px;height:24px;background:#cdcdcd;"></div>
<svg style="left:734px;top:593.5px" width="8" height="6" viewBox="0 0 8 6"><path d="M0.8 0.6 L4 4.4 L7.2 0.6" fill="none" stroke="#555" stroke-width="1.7"/></svg>
</div></body></html>
